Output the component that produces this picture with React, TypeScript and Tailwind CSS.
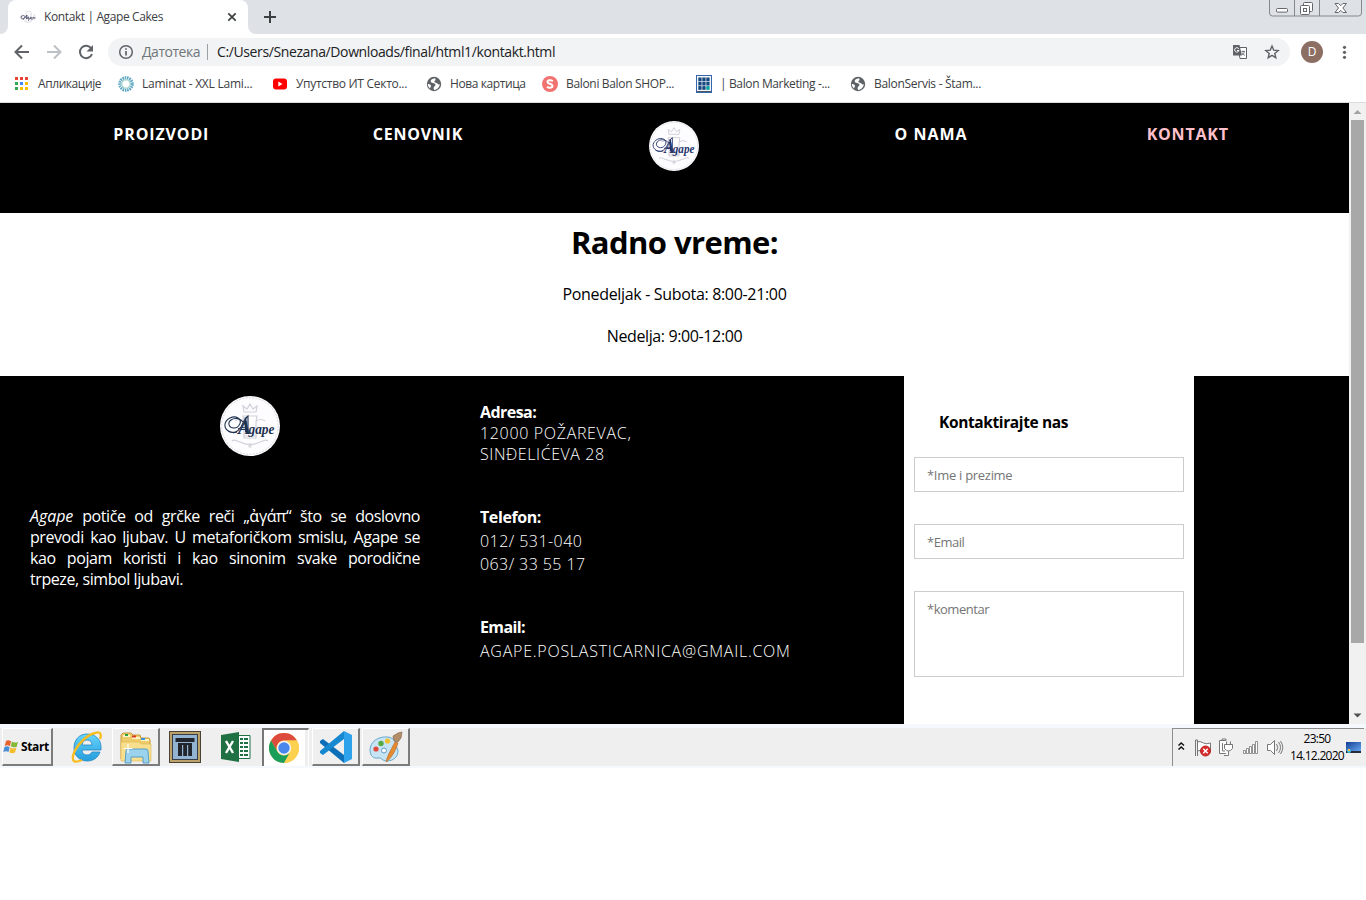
import type { ReactNode } from "react";

function Crest({ size, ink }: { size: number; ink: string }) {
  return (
    <svg width={size} height={size} viewBox="0 0 60 60">
      <circle cx="30" cy="30" r="30" fill="#fdfcfe" />
      <circle cx="30" cy="30" r="28.3" fill="none" stroke="#cfcad4" strokeWidth=".8" strokeDasharray="2 1.3" />
      <g fill="none" stroke="#d3d1da" strokeWidth="1.2">
        <path d="M24 16l-1-6 4 3 3-5 3 5 4-3-1 6zM23 20h14l-1 7v15H24V27zM20 46q10 5 20 0M12 45c3-3 6 2 9 1M48 45c-3-3-6 2-9 1M28 50h4M30 47v5" />
        <path d="M15 25q5-3 9 0M36 25q5-3 9 0M23 40h14" />
      </g>
      <g fill="none" stroke={ink} strokeWidth="1.1">
        <path d="M17 36c-6 2-13-2-12-8 1-5 8-9 13-6s1 10-4 10-7-5-3-8 10-1 12 2M8 35c5 3 10 1 13-4 2-4 4-9 7-11v17" />
        <path d="M18 33q5-3 10 0" />
        <path d="M25.500 21.500l.5 15" strokeWidth="1.800" />
      </g>
      <text x="6" y="38" fontFamily="Liberation Serif, serif" fontStyle="italic" fontWeight="700" fontSize="15.500" fill={ink}>
        <tspan x="18" fontSize="19">A</tspan>
        <tspan x="28.500" textLength="26" lengthAdjust="spacingAndGlyphs">gape</tspan>
      </text>
    </svg>
  );
}

function Globe() {
  return (
    <svg width="16" height="16" viewBox="0 0 16 16">
      <circle cx="8" cy="8" r="7.2" fill="#5f6368" />
      <path d="M9 2.300c-2.600.3-4.500 1.600-4.300 3.200.2 1.800 4.300 1 4.700 3 .3 1.700-1.500 1.600-1.800 3.400-.1.800.2 1.500.6 2 3.300-.4 5.500-3 5.600-6-.8.800-2 .6-2.400-.3-.5-1.300-2.700-.5-2.900-1.700-.2-1.400 2-1.300.5-3.600zM1.800 8c1.500 0 3 .6 3.200 1.800.1.900-.7 1.500-.9 2.600C2.600 11.300 1.800 9.800 1.800 8z" fill="#fff" />
    </svg>
  );
}

const appDots = ["#ea4335", "#ea4335", "#ea4335", "#34a853", "#4285f4", "#fbbc04", "#34a853", "#fbbc04", "#fbbc04"];

function AppsIcon() {
  return (
    <svg width="16" height="16" viewBox="0 0 16 16">
      {appDots.map((c, i) => (
        <rect key={i} x={1 + (i % 3) * 5} y={1 + Math.floor(i / 3) * 5} width="3" height="3" fill={c} />
      ))}
    </svg>
  );
}

function LaminatIcon() {
  return (
    <svg width="16" height="16" viewBox="0 0 16 16" fill="none">
      <circle cx="8" cy="8" r="6.300" stroke="#62a9c4" strokeWidth="3" strokeDasharray="1.600 .7" />
      <circle cx="8" cy="8" r="4.200" stroke="#8fcabb" strokeWidth="1" />
    </svg>
  );
}

function YoutubeIcon() {
  return (
    <svg width="16" height="16" viewBox="0 0 16 16">
      <rect x="1" y="2.5" width="14" height="11" rx="3" fill="#f00" />
      <path d="M6.3 5.6v4.8L10.5 8z" fill="#fff" />
    </svg>
  );
}

function ShopIcon() {
  return (
    <svg width="16" height="16" viewBox="0 0 16 16">
      <circle cx="8" cy="8" r="8" fill="#f0736f" />
      <path d="M10.800 5.200C9 3.600 5.300 4 5.500 6.100c.2 1.900 4.900 1.500 5 3.700.1 2.200-3.800 2.500-5.400.9" stroke="#fff" strokeWidth="2" fill="none" />
    </svg>
  );
}

function GridIcon() {
  return (
    <svg width="16" height="18" viewBox="0 0 16 18">
      <rect x=".5" y=".5" width="15" height="17" fill="#f3f6fa" stroke="#3565ab" />
      {[0, 1, 2, 3, 4, 5, 6, 7, 8].map((i) => (
        <rect key={i} x={2.3 + (i % 3) * 4} y={2.5 + Math.floor(i / 3) * 4.3} width="3.3" height="3.7" fill={i === 8 ? "#00a3a0" : "#17477f"} />
      ))}
      <path d="M1 16.5h14" stroke="#4e5863" />
    </svg>
  );
}

const bookmarks: { icon: ReactNode; label: string; width: string; tracking: string }[] = [
  { icon: <AppsIcon />, label: "Апликације", width: "w-[104px]", tracking: "tracking-[-0.42px]" },
  { icon: <LaminatIcon />, label: "Laminat - XXL Lami...", width: "w-[154px]", tracking: "tracking-[-0.23px]" },
  { icon: <YoutubeIcon />, label: "Упутство ИТ Секто...", width: "w-[154px]", tracking: "tracking-[-0.29px]" },
  { icon: <Globe />, label: "Нова картица", width: "w-[116px]", tracking: "tracking-[-0.41px]" },
  { icon: <ShopIcon />, label: "Baloni Balon SHOP...", width: "w-[154px]", tracking: "tracking-[-0.33px]" },
  { icon: <GridIcon />, label: "| Balon Marketing -...", width: "w-[154px]", tracking: "tracking-[-0.37px]" },
  { icon: <Globe />, label: "BalonServis - Štam...", width: "w-[154px]", tracking: "tracking-[-0.29px]" },
];

function TabStrip() {
  return (
    <div className="flex h-[34px] items-start justify-between bg-[#dee1e6]">
      <div className="flex h-full">
        <div className="flex w-2 items-end bg-white">
          <div className="h-full w-2 rounded-br-lg bg-[#dee1e6]" />
        </div>
        <div className="flex h-full w-60 items-center rounded-t-lg bg-white pl-3 pr-2">
          <svg width="16" height="16" viewBox="0 0 16 16" className="shrink-0" fill="none">
            <path d="M5 3l1-1 2 1 2-1 1 1v3M4 12q4 3 8 0M6 4v8M11 5v7M2 5q-2 3 0 6M14 5q2 3 0 6" stroke="#e1dce4" />
            <path d="M4 10C1 10 0 8 2 7s4 0 2 2M3 10c2 0 3-3 4-4l-.5 4M9 8q-2 0-1.500 1.500L9 9v2l-1 .5M11 8q-1 0-1 1.500l1.500-.5M12 8v3M13 8.500q1-1 .5 1M14 9h1.500" stroke="#454a67" strokeWidth=".9" />
          </svg>
          <span className="ml-2 flex-1 whitespace-nowrap text-[12px] leading-4 tracking-[-0.39px] text-[#3c4043]">Kontakt | Agape Cakes</span>
          <svg width="16" height="16" viewBox="0 0 16 16" stroke="#3c4043" strokeWidth="1.7"><path d="M4.3 4.3l7.4 7.4M11.7 4.3l-7.4 7.4" /></svg>
        </div>
        <div className="bg-white"><div className="h-full w-2 rounded-bl-lg bg-[#dee1e6]" /></div>
        <svg width="28" height="34" viewBox="0 0 28 34" stroke="#3c4043" strokeWidth="2"><path d="M8 17h12M14 11v12" /></svg>
      </div>
      <svg width="98" height="18" viewBox="0 0 98 18" fill="none">
        <path d="M1.5 0v13q0 3 3 3h86q3 0 3-3V0M26.5 0v16M51.5 0v16" stroke="#85888e" />
        <rect x="8.5" y="8.5" width="11" height="3.6" rx="1" fill="#fff" stroke="#63666c" />
        <rect x="35.500" y="2.500" width="9" height="9" rx="1" fill="#fff" stroke="#63666c" />
        <rect x="32.500" y="5.500" width="9" height="9" rx="1" fill="#fff" stroke="#63666c" />
        <rect x="35.500" y="8.500" width="3" height="3" stroke="#63666c" />
        <path d="M67 3.500h3.500l2.200 2.200 2.200-2.200h3.500l-3.500 4.500 3.500 4.500h-3.500l-2.200-2.200-2.200 2.200H67L70.500 8z" fill="#fff" stroke="#63666c" />
      </svg>
    </div>
  );
}

function Toolbar() {
  return (
    <div className="flex h-9 items-center bg-white pl-3">
      <div className="flex w-24 items-center gap-3">
        <svg width="20" height="20" viewBox="0 0 20 20" fill="none" stroke="#5f6368" strokeWidth="2"><path d="M17 10H4M10 3.500L3.500 10l6.500 6.500" /></svg>
        <svg width="20" height="20" viewBox="0 0 20 20" fill="none" stroke="#bdc1c6" strokeWidth="2"><path d="M3 10h13M10 3.500l6.500 6.500-6.500 6.500" /></svg>
        <svg width="20" height="20" viewBox="0 0 20 20" fill="none" stroke="#5f6368" strokeWidth="2"><path d="M15.300 6.500A6.200 6.200 0 1 0 16 12" /><path d="M17 3v6.500h-6.500z" fill="#5f6368" stroke="none" /></svg>
      </div>
      <div className="flex h-7 w-[1182px] items-center rounded-full bg-[#f1f3f4] px-[10px]">
        <svg width="16" height="16" viewBox="0 0 16 16" fill="none" stroke="#5f6368" strokeWidth="1.500"><circle cx="8" cy="8" r="6.300" /><path d="M8 7v4.500M8 4.200v1.600" strokeWidth="1.700" /></svg>
        <span className="ml-2 w-[58px] whitespace-nowrap text-[14px] leading-5 tracking-[-0.48px] text-[#70757a]">Датотека</span>
        <div className="ml-[7px] mr-[9px] h-4 w-px bg-[#9aa0a6]" />
        <span className="flex-1 whitespace-nowrap text-[14px] leading-5 tracking-[-0.385px] text-[#202124]">C:/Users/Snezana/Downloads/final/html1/kontakt.html</span>
        <svg width="16" height="16" viewBox="0 0 16 16" className="mr-4" fill="none">
          <path d="M6 3.500h8.500v11H8z" fill="#fff" stroke="#5f6368" />
          <path d="M1 1h6.500l2.500 10.500H1z" fill="#5f6368" />
          <path d="M6.800 4.800A2.200 2.200 0 1 0 7 6.500H5" stroke="#fff" strokeWidth="1" />
          <path d="M9.500 7.500H13M11.200 6.500v1M12.500 7.500q-.5 2.500-2.500 3.500M10 8.500q.8 2 3 3" stroke="#5f6368" strokeWidth=".8" />
        </svg>
        <svg width="16" height="16" viewBox="0 0 16 16" fill="none" stroke="#5f6368" strokeWidth="1.400"><path d="M8 2l1.700 4.100 4.500.4-3.400 2.900 1 4.300L8 11.400l-3.800 2.300 1-4.300-3.400-2.900 4.500-.4z" /></svg>
      </div>
      <div className="ml-[11px] flex h-[22px] w-[22px] items-center justify-center rounded-full bg-[#8d6e63] text-[12px] leading-none text-white">D</div>
      <svg width="16" height="16" viewBox="0 0 16 16" className="ml-[13px]" fill="#5f6368"><circle cx="8.500" cy="3.300" r="1.600" /><circle cx="8.500" cy="8.300" r="1.600" /><circle cx="8.500" cy="13.300" r="1.600" /></svg>
    </div>
  );
}

function BookmarksBar() {
  return (
    <div className="flex h-[33px] items-center border-b border-[#d9dbde] bg-white pb-[4px] pl-[14px]">
      {bookmarks.map((b) => (
        <div key={b.label} className={`flex shrink-0 items-center gap-2 ${b.width}`}>
          <span className="flex w-4 shrink-0 justify-center">{b.icon}</span>
          <span className={`whitespace-nowrap text-[12px] leading-4 text-[#3c4043] ${b.tracking}`}>{b.label}</span>
        </div>
      ))}
    </div>
  );
}

function SiteNav() {
  return (
    <nav className="grid h-[110px] grid-cols-5 bg-black px-[33px] pt-[18px] text-center text-[16px] font-bold leading-[27px] text-white">
      <span className="tracking-[0.87px]">PROIZVODI</span>
      <span className="tracking-[0.76px]">CENOVNIK</span>
      <div className="flex justify-center"><Crest size={50} ink="#26366c" /></div>
      <span className="tracking-[0.99px]">O NAMA</span>
      <span className="tracking-[0.78px] text-[#ffc0cb]">KONTAKT</span>
    </nav>
  );
}

function Footer() {
  return (
    <footer className="flex h-[348px] overflow-hidden bg-black text-[16px] leading-[21px] text-white">
      <section className="w-[450px] px-[30px] pt-5">
        <div className="mb-[50px] ml-[190px] h-[60px]"><Crest size={60} ink="#1d3150" /></div>
        <p className="text-justify tracking-[-0.42px]"><em className="tracking-[-0.05px]">Agape</em> potiče od grčke reči „ἀγάπ“ što se doslovno prevodi kao ljubav. U metaforičkom smislu, Agape se kao pojam koristi i kao sinonim svake porodične trpeze, simbol ljubavi.</p>
      </section>
      <section className="w-[454px] whitespace-nowrap pl-[30px] pt-[26px] font-light">
        <h3 className="font-bold tracking-[-0.55px]">Adresa:</h3>
        <p className="tracking-[0.67px]">12000 POŽAREVAC,</p>
        <p className="tracking-[0.57px]">SINĐELIĆEVA 28</p>
        <h3 className="mt-[42px] font-bold tracking-[-0.4px]">Telefon:</h3>
        <p className="mt-px leading-6 tracking-[0.45px]">012/ 531-040</p>
        <p className="leading-[23px] tracking-[0.42px]">063/ 33 55 17</p>
        <h3 className="mt-[41px] font-bold tracking-[-0.6px]">Email:</h3>
        <p className="mt-px leading-6 tracking-[0.75px]">AGAPE.POSLASTICARNICA@GMAIL.COM</p>
      </section>
      <form className="w-[290px] bg-white px-[10px] pt-9 text-black">
        <h3 className="ml-[25px] text-[15.5px] font-bold tracking-[-0.38px]">Kontaktirajte nas</h3>
        <input placeholder="*Ime i prezime" className="mt-6 block h-[35px] w-full border border-[#ccc] px-3 text-[13px] tracking-[-0.29px] placeholder:text-[#757575]" />
        <input placeholder="*Email" className="mt-8 block h-[35px] w-full border border-[#ccc] px-3 text-[13px] tracking-[-0.5px] placeholder:text-[#757575]" />
        <textarea placeholder="*komentar" className="mt-8 block h-[86px] w-full resize-none border border-[#ccc] px-3 py-2 text-[13px] leading-[18px] tracking-[-0.48px] placeholder:text-[#757575]" />
      </form>
    </footer>
  );
}

function Scrollbar() {
  return (
    <div className="flex w-[17px] flex-col items-center bg-[#f1f1f1]">
      <svg width="17" height="17" viewBox="0 0 17 17"><path d="M4.500 11h8L8.500 7z" fill="#a3a3a3" /></svg>
      <div className="h-[523px] w-[13px] bg-[#a8a8a8]" />
      <svg width="17" height="17" viewBox="0 0 17 17" className="mt-auto"><path d="M4.500 6.500h8l-4 4z" fill="#505050" /></svg>
    </div>
  );
}

const raised = "border-t border-l border-r-2 border-b-2 border-t-white border-l-white border-r-[#7c7c7c] border-b-[#7c7c7c]";

function IeIcon() {
  return (
    <svg width="32" height="34" viewBox="0 0 32 34" fill="none">
      <defs><linearGradient id="ie" x2="0" y2="1"><stop stopColor="#68d5fb" /><stop offset="1" stopColor="#249ddc" /></linearGradient></defs>
      <path fillRule="evenodd" d="M16 4C8 4 3 10 3 18c0 8 6 13 13 13 6 0 11-3 13-9h-8c-1 2-3 3-5 3-3 0-5-2-5-5h19C31 10 25 4 16 4zm-5 11c.5-3 2-5 5-5s5 2 5 5z" fill="url(#ie)" stroke="#2187c4" strokeWidth=".8" />
      <path d="M29 9c2-5 0-8-5-6C15 5 4 17 2 26c-1 6 2 7 9 4" stroke="#f7bd20" strokeWidth="2.400" />
    </svg>
  );
}

function FolderIcon() {
  return (
    <svg width="34" height="34" viewBox="0 0 34 34">
      <path d="M2 29V5l2-2h8l2 2h7l1 3h8l1 2v19z" fill="#eecb6b" stroke="#c49a3d" />
      <path d="M4 5h7v2H4zM13 7h8v2h-8zM22 9h8v2h-8z" fill="#fff4c4" />
      <path d="M6 4h3v2H6z" fill="#29a345" /><path d="M13 5.500h4v2h-4z" fill="#db3c29" /><path d="M22 8h4v2h-4z" fill="#3b94db" />
      <path d="M2 12h18l2 2h10v17H2z" fill="#f8df8d" stroke="#ddb653" strokeWidth=".6" />
      <path d="M6 33l1-12q0-2 2-2h18q2 0 2 2l1 12h-6v-6H12v6z" fill="#9bd3ed" stroke="#589ec5" />
      <path d="M9 14v9M4.500 18.500h9" stroke="#fff" strokeWidth="1.200" />
    </svg>
  );
}

function PillarIcon() {
  return (
    <svg width="32" height="32" viewBox="0 0 32 32">
      <rect x=".5" y=".5" width="31" height="31" fill="#bca16b" stroke="#4a4335" />
      <rect x="3" y="3" width="26" height="26" fill="#353c45" /><rect x="4" y="4" width="24" height="24" fill="#92b3d2" />
      <path d="M6.500 7h19v4h-19zM9 12h14v2H9zM9 14h4v11H9zM14.200 14h3.800v11h-3.800zM19.200 14H23v11h-3.800z" fill="#22262c" />
    </svg>
  );
}

function ExcelIcon() {
  return (
    <svg width="32" height="32" viewBox="0 0 32 32">
      <path d="M17 4.500h13v23H17z" fill="#fff" stroke="#1f7144" />
      <path d="M20 7h3v2h-3zM24 7h4v2h-4zM20 11h3v2h-3zM24 11h4v2h-4zM20 15h3v2h-3zM24 15h4v2h-4zM20 19h3v2h-3zM24 19h4v2h-4zM20 23h3v2h-3zM24 23h4v2h-4z" fill="#1f7144" />
      <path d="M1 4l18-3v30L1 28z" fill="#1f7144" />
      <path d="M6 10l7 12M13 10L6 22" stroke="#fff" strokeWidth="2.400" />
    </svg>
  );
}

function ChromeIcon() {
  return (
    <svg width="30" height="30" viewBox="0 0 30 30">
      <circle cx="15" cy="15" r="15" fill="#fcd14f" />
      <path d="M2 7.500A15 15 0 0 1 28 7.500H15a7.500 7.500 0 0 0-6.500 11.250z" fill="#dd4b3e" />
      <path d="M2 7.500A15 15 0 0 0 15 30l6.500-11.250a7.500 7.500 0 0 1-13 0z" fill="#1b9e5a" />
      <path d="M15 7.500h13A15 15 0 0 1 15 30l6.500-11.250A7.500 7.500 0 0 0 15 7.500z" fill="#fcd14f" />
      <circle cx="15" cy="15" r="7.200" fill="#f5f5f5" /><circle cx="15" cy="15" r="5.700" fill="#4a87ed" />
    </svg>
  );
}

function CodeIcon() {
  return (
    <svg width="32" height="32" viewBox="0 0 32 32">
      <path d="M24 0l8 4v24l-8 4z" fill="#2ea3ec" />
      <path d="M0 10l3-2 21 16v8L0 12z" fill="#0d6fb8" />
      <path d="M0 22l3 2L24 8V0L0 20z" fill="#1588d0" />
    </svg>
  );
}

function PaintIcon() {
  return (
    <svg width="34" height="32" viewBox="0 0 34 32">
      <path d="M19 6C9 5 1 11 1 19c0 6 4 9 8 8 3-1 4 3 9 3 6 0 11-4 11-10 0-3-2-3-2-6s-2-7-8-8z" fill="#c6e4f4" stroke="#68a9cf" />
      <circle cx="7" cy="18" r="2.600" fill="#e0483b" /><circle cx="12" cy="12.500" r="2.700" fill="#54aa45" /><circle cx="18.500" cy="10" r="2.600" fill="#f2c22e" />
      <circle cx="15" cy="19.500" r="2.500" fill="#fff" stroke="#5a9ac1" />
      <path d="M17 31c1-6 7-16 9-20l3 1c-2 7-7 16-12 19z" fill="#e58b32" stroke="#b86220" strokeWidth=".6" />
      <path d="M25 10l-1-5 5-3 4-1-1 6-3 4z" fill="#b28e68" stroke="#806043" strokeWidth=".6" />
    </svg>
  );
}

function StartButton() {
  return (
    <div className={`flex h-[38px] w-[51px] items-center gap-[2px] ${raised}`}>
      <svg width="16" height="16" viewBox="0 0 16 16" className="shrink-0">
        <path d="M3 2q2-1.500 5 .3L7 7.200Q4.500 5.600 1.800 7z" fill="#e7622d" /><path d="M8.800 2.600Q11.500 4.200 15 3l-1.300 4.700Q11 9 7.900 7.600z" fill="#83b83a" />
        <path d="M1.500 8q2.500-1.500 5.200.2L5.500 13Q3.200 11.600.3 13z" fill="#4a8ed4" /><path d="M7.600 8.500q2.800 1.600 5.800.3L12 13.500q-2.600 1.500-5.700-.2z" fill="#f5bc2b" />
      </svg>
      <span className="whitespace-nowrap text-[12px] font-bold leading-4 tracking-[-0.35px] text-black">Start</span>
    </div>
  );
}

function Tray() {
  return (
    <div className="flex h-[38px] w-[192px] items-center border-l border-t border-[#8d8d8d] bg-[#efefef]">
      <svg width="116" height="24" viewBox="0 1 116 24" fill="none" stroke="#777" className="shrink-0">
        <path d="M5.500 10.500l2.700-2.500L11 10.500M5.500 14.500l2.700-2.500L11 14.500" stroke="#111" strokeWidth="1.500" />
        <path d="M22.500 5v16M24.500 5v16M22.500 5h2M24.500 6.500q4 0 6 1.500t7 0v8q-3 1-7 0t-6 0" fill="#fff" />
        <circle cx="32.500" cy="16" r="5" fill="#da2b2b" stroke="#b52525" /><path d="M30.300 13.800l4.400 4.400M34.700 13.800l-4.400 4.400" stroke="#fff" strokeWidth="1.500" />
        <path d="M53 5.500h-6.500v13H55M49.500 8v8h2.500M49 5.500V4h4v1.500" fill="#fff" />
        <path d="M51.500 9.500h8v4q-4 5-8 0zM53.500 6.500v3M57.500 6.500v3M55.500 16v4.500H51" fill="#fff" />
        <path d="M70.500 15.500h2v3h-2zM73.500 13.500h2v5h-2zM76.500 11.500h2v7h-2zM79.500 9.500h2v9h-2zM82.500 6.500h2v12h-2z" fill="#fff" strokeWidth=".8" />
        <path d="M94.500 9.500h3l4-4v14l-4-4h-3z" fill="#fff" /><path d="M103.500 9q2.500 3.500 0 7M105.500 7q4 5.500 0 11M107.500 6q4.500 6.500 0 13" />
      </svg>
      <div className="-mt-[2px] w-[56px] shrink-0 text-center text-[12px] leading-[17px] text-black">
        <div className="tracking-[-0.72px]">23:50</div>
        <div className="whitespace-nowrap tracking-[-0.72px]">14.12.2020</div>
      </div>
      <svg width="17" height="16" viewBox="0 0 17 16" className="shrink-0">
        <defs><linearGradient id="screen" x2="1" y2="1"><stop stopColor="#123e94" /><stop offset="1" stopColor="#66a5ef" /></linearGradient></defs>
        <path d="M1 2h15v9H1z" fill="url(#screen)" /><path d="M1 11h15v2H1z" fill="#252d3a" /><circle cx="4" cy="11" r="2" fill="#3fc0e4" /><path d="M3 9h2v2H3z" fill="#f4c044" />
      </svg>
    </div>
  );
}

function Taskbar() {
  return (
    <div className="flex h-11 items-start justify-between border-b-2 border-t-4 border-[#f5f8fc] bg-[#efefef] pl-[2px]">
      <div className="flex h-[38px] items-start">
        <StartButton />
        <div className="ml-[10px] flex h-[38px] w-12 items-center justify-center pr-px"><IeIcon /></div>
        <div className={`ml-[1px] flex h-[38px] w-12 items-center justify-center ${raised}`}><FolderIcon /></div>
        <div className="flex h-[38px] w-[51px] items-center justify-center pr-px"><PillarIcon /></div>
        <div className="flex h-[38px] w-[51px] items-center justify-center pr-[2px]"><ExcelIcon /></div>
        <div className="flex h-[38px] w-[43px] items-center justify-center border-l-2 border-t-2 border-l-[#777] border-t-[#777] bg-white pr-[2px]"><ChromeIcon /></div>
        <div className="mr-[2px] h-[38px] w-[4px] border-r border-t-2 border-r-white border-t-[#777]" />
        <div className={`ml-[1px] flex h-[38px] w-[48px] items-center justify-center ${raised}`}><CodeIcon /></div>
        <div className={`ml-[2px] flex h-[38px] w-[48px] items-center justify-center ${raised}`}><PaintIcon /></div>
      </div>
      <div className="pr-[2px]"><Tray /></div>
    </div>
  );
}

export default function App() {
  return (
    <div className="h-[900px] w-[1366px] overflow-hidden bg-white font-['Open_Sans','Noto_Sans',sans-serif]">
      <TabStrip />
      <Toolbar />
      <BookmarksBar />
      <div className="flex h-[621px]">
        <main className="w-[1349px]">
          <SiteNav />
          <section className="h-[163px] bg-white pt-2 text-center text-[16px] leading-[21px] text-black">
            <h1 className="text-[31px] font-bold leading-[43px] tracking-[-0.58px]">Radno vreme:</h1>
            <p className="mt-5 tracking-[-0.33px]">Ponedeljak - Subota: 8:00-21:00</p>
            <p className="mt-[21px] tracking-[-0.38px]">Nedelja: 9:00-12:00</p>
          </section>
          <Footer />
        </main>
        <Scrollbar />
      </div>
      <Taskbar />
    </div>
  );
}
